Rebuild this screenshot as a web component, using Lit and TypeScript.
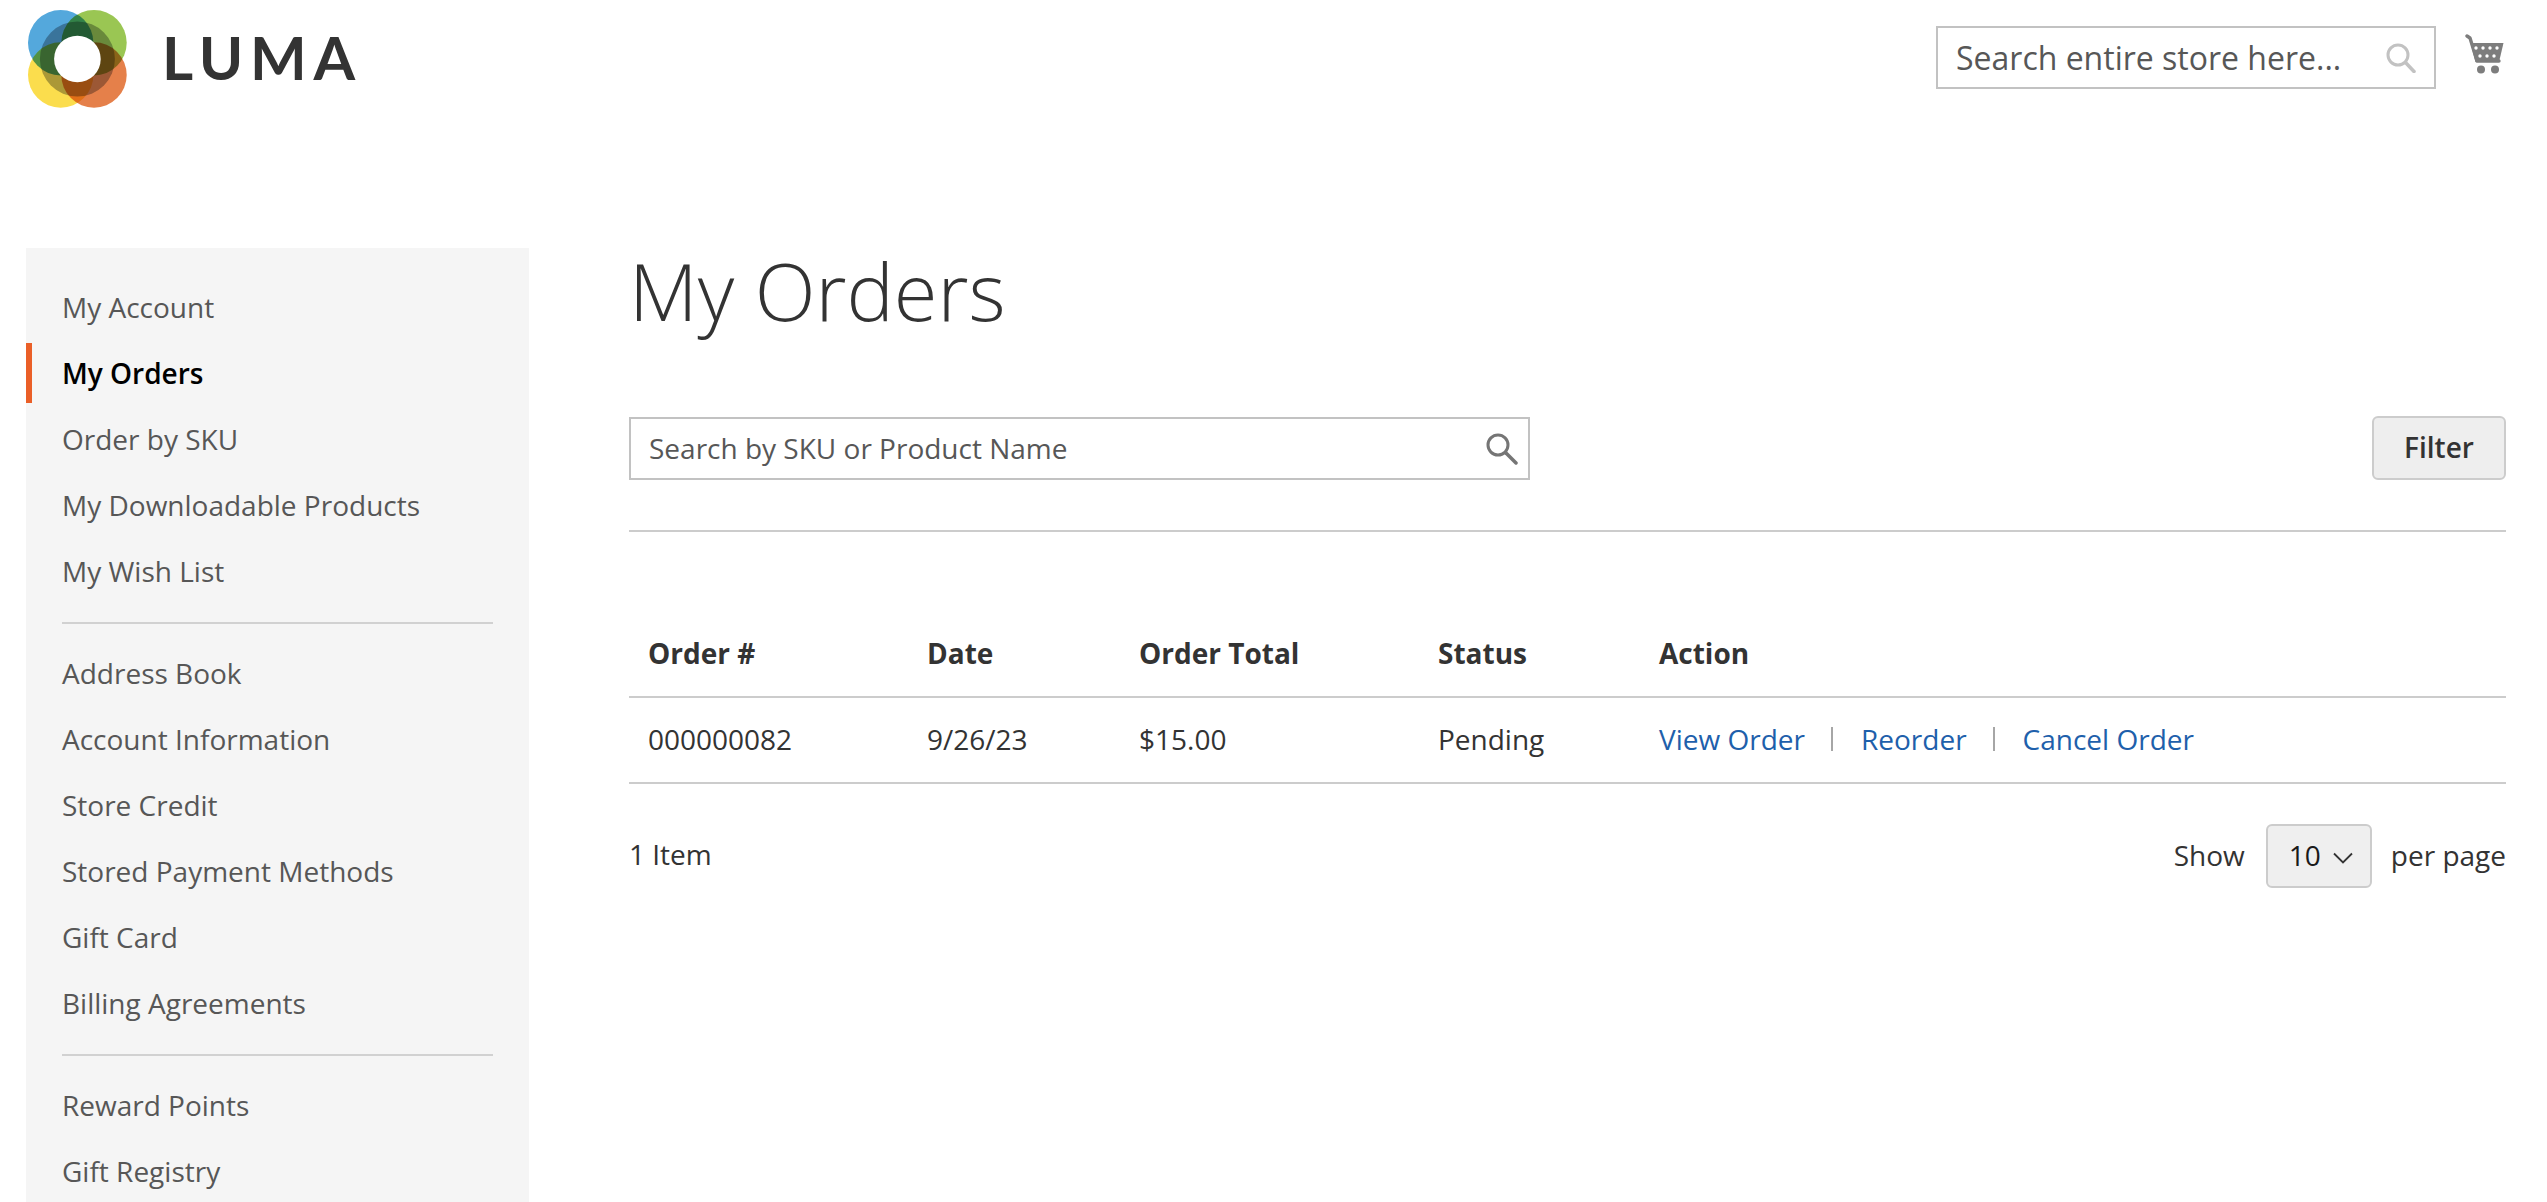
import { LitElement, html, css, svg } from "lit";
import { customElement } from "lit/decorators.js";

const group1 = ["My Account", "My Orders", "Order by SKU", "My Downloadable Products", "My Wish List"];
const group2 = ["Address Book", "Account Information", "Store Credit", "Stored Payment Methods", "Gift Card", "Billing Agreements"];
const group3 = ["Reward Points", "Gift Registry"];

@customElement("app-root")
export class AppRoot extends LitElement {
  static styles = css`
    :host { display: block; height: 1202px; overflow: hidden; background: #fff; color: #333; font-family: "Open Sans", sans-serif; font-size: 28px; }
    * { box-sizing: border-box; }
    .header { height: 248px; display: flex; align-items: flex-start; padding: 0 43px 0 28px; }
    .logo { display: flex; align-items: flex-start; flex: 1; padding-top: 10px; gap: 35px; }
    .logo svg { display: block; width: 99px; height: 98px; isolation: isolate; }
    .logo circle { mix-blend-mode: multiply; }
    .logo circle.hole { mix-blend-mode: normal; }
    .wordmark { font-family: Lato, sans-serif; font-size: 60px; line-height: 98px; letter-spacing: 6.8px; font-weight: 700; color: #333; margin-top: -2px; }
    .store-search { width: 500px; height: 63px; margin-top: 26px; border: 2px solid #c2c2c2; display: flex; align-items: center; justify-content: space-between; padding: 0 18px 0 18px; color: #575757; font-size: 32px; white-space: nowrap; }
    .store-search svg { display: block; width: 30px; height: 30px; }
    .cart { display: block; width: 39px; height: 41px; margin: 33px 0 0 29px; }
    .body { display: flex; align-items: flex-start; padding-left: 26px; padding-right: 41px; }
    .side { width: 503px; flex: none; background: #f5f5f5; padding: 26px 0 200px; }
    .side a { display: flex; align-items: center; height: 66px; padding-left: 36px; color: #575757; white-space: nowrap; }
    .side a.on { color: #000; font-weight: 600; position: relative; }
    .side a.on::before { content: ""; position: absolute; left: 0; top: 3px; bottom: 3px; width: 6px; background: #ea5f27; }
    .side hr { border: 0; height: 2px; background: #d1d1d1; margin: 18px 36px 16px 36px; }
    .main { flex: 1; margin-left: 100px; min-width: 0; }
    h1 { margin: -3px 0 0; font-size: 79.5px; font-weight: 300; line-height: 90px; height: 104px; color: #333; }
    .filters { margin-top: 67px; display: flex; justify-content: space-between; align-items: flex-start; padding-bottom: 50px; border-bottom: 2px solid #ccc; }
    .order-search { width: 901px; height: 63px; margin-top: 1px; border: 2px solid #c2c2c2; display: flex; align-items: center; justify-content: space-between; padding: 0 10px 2px 18px; color: #575757; }
    .order-search svg { display: block; width: 32px; height: 32px; margin-top: 2px; }
    .filter-btn { width: 134px; height: 64px; background: #eee; border: 2px solid #ccc; border-radius: 6px; font: 600 28px "Open Sans", sans-serif; color: #333; display: flex; align-items: center; justify-content: center; padding-bottom: 2px; }
    table { width: 100%; margin-top: 75px; border-collapse: collapse; table-layout: fixed; }
    th { text-align: left; font-weight: 700; height: 90px; padding: 2px 0 0 19px; border-bottom: 2px solid #ccc; }
    td { height: 86px; padding: 0 0 2px 19px; border-bottom: 2px solid #ccc; white-space: nowrap; }
    .c1 { width: 279px; } .c2 { width: 212px; } .c3 { width: 299px; } .c4 { width: 221px; }
    .actions { display: flex; align-items: center; }
    .actions a { color: #1e60ab; }
    .actions i { display: block; width: 2px; height: 24px; background: #a6a6a6; margin: 0 28px 0 26px; }
    .pager { margin-top: 40px; display: flex; justify-content: space-between; align-items: center; height: 64px; }
    .count { padding-bottom: 5px; }
    .limiter { display: flex; align-items: center; }
    .limiter > span { padding-bottom: 3px; }
    .select { width: 106px; height: 64px; background: #efefef; border: 2px solid #ccc; border-radius: 6px; display: flex; align-items: center; padding: 0 0 2px 21px; gap: 12px; margin: 0 19px 0 21px; color: #1a1a1a; }
    .select svg { display: block; width: 20px; height: 12px; margin-top: 6px; }
  `;

  logo() {
    return html`<svg viewBox="0 0 99 98">
      <circle cx="32.7" cy="32.7" r="32.7" fill="#54a8dc"></circle>
      <circle cx="66" cy="32.7" r="32.7" fill="#9ac653"></circle>
      <circle cx="32.7" cy="65" r="32.7" fill="#fbdd4d"></circle>
      <circle cx="66" cy="65" r="32.7" fill="#e5804a"></circle>
      <circle cx="49.4" cy="49" r="37.5" fill="#aeb0b4"></circle>
      <circle class="hole" cx="49.4" cy="49" r="23.3" fill="#fff"></circle>
    </svg>`;
  }

  cart() {
    return html`<svg class="cart" viewBox="10 8 39 41">
      <path d="M12 11 L15 13 L22 36 H44" fill="none" stroke="#7d7d7d" stroke-width="3.4" stroke-linecap="round" stroke-linejoin="round"></path>
      <path d="M15.5 18 H48.5 L44 37 H20.5 Z" fill="#7d7d7d"></path>
      ${[21, 28, 35, 42].map((x) => svg`<circle cx="${x}" cy="23" r="1.7" fill="#fff"></circle>`)}
      ${[25, 32, 39].map((x) => svg`<circle cx="${x}" cy="31" r="1.7" fill="#fff"></circle>`)}
      <circle cx="26" cy="44.5" r="4" fill="#7d7d7d"></circle>
      <circle cx="40" cy="44.5" r="4" fill="#7d7d7d"></circle>
    </svg>`;
  }

  navLink(t: string) {
    return html`<a class=${t === "My Orders" ? "on" : ""}>${t}</a>`;
  }

  render() {
    return html`
      <div class="header">
        <div class="logo">${this.logo()}<span class="wordmark">LUMA</span></div>
        <div class="store-search">
          <span>Search entire store here...</span>
          <svg viewBox="0 0 30 30"><circle cx="12" cy="12" r="10" fill="none" stroke="#c2c2c2" stroke-width="3"></circle><path d="M19.5 19.5 L28 28.5" stroke="#c2c2c2" stroke-width="3.5" stroke-linecap="round"></path></svg>
        </div>
        ${this.cart()}
      </div>
      <div class="body">
        <nav class="side">
          ${group1.map((t) => this.navLink(t))}
          <hr />
          ${group2.map((t) => this.navLink(t))}
          <hr />
          ${group3.map((t) => this.navLink(t))}
        </nav>
        <main class="main">
          <h1>My Orders</h1>
          <div class="filters">
            <div class="order-search">
              <span>Search by SKU or Product Name</span>
              <svg viewBox="0 0 32 32"><circle cx="12" cy="12" r="10" fill="none" stroke="#757575" stroke-width="3"></circle><path d="M20 20 L30 30" stroke="#757575" stroke-width="3.5" stroke-linecap="round"></path></svg>
            </div>
            <div class="filter-btn">Filter</div>
          </div>
          <table>
            <colgroup><col class="c1" /><col class="c2" /><col class="c3" /><col class="c4" /><col /></colgroup>
            <thead><tr><th>Order #</th><th>Date</th><th>Order Total</th><th>Status</th><th>Action</th></tr></thead>
            <tbody><tr><td>000000082</td><td>9/26/23</td><td>$15.00</td><td>Pending</td>
              <td><div class="actions"><a>View Order</a><i></i><a>Reorder</a><i></i><a>Cancel Order</a></div></td></tr></tbody>
          </table>
          <div class="pager">
            <span class="count">1 Item</span>
            <div class="limiter"><span>Show</span>
              <div class="select"><span>10</span><svg viewBox="0 0 20 12"><path d="M1 1.5 L10 10.5 L19 1.5" fill="none" stroke="#333" stroke-width="1.8"></path></svg></div>
              <span>per page</span></div>
          </div>
        </main>
      </div>
    `;
  }
}
